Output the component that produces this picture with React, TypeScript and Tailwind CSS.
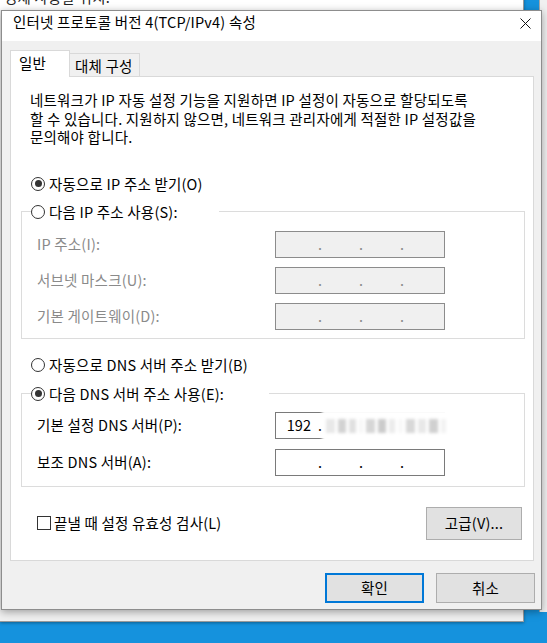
import React from "react";

const Radio = ({ checked, label, dim }: { checked?: boolean; label: string; dim?: boolean }) => (
  <div className="flex h-[18px] items-center gap-[4px]">
    <span className="flex h-[14px] w-[14px] shrink-0 items-center justify-center rounded-full border border-[#333] bg-white">
      {checked && <span className="h-[7px] w-[7px] rounded-full bg-[#333]" />}
    </span>
    <span className={dim ? "text-[#8a8a8a]" : "text-black"}>{label}</span>
  </div>
);

const IpBox = ({ disabled, first, blurred }: { disabled?: boolean; first?: string; blurred?: boolean }) => (
  <div
    className={
      "relative flex h-[27px] w-[170px] shrink-0 items-center border pl-[4px] " +
      (disabled ? "border-[#8c8c8c] bg-[#f0f0f0] text-[#8a8a8a]" : "border-[#7a7a7a] bg-white text-black")
    }
  >
    <span className="w-[38px] text-center">{first ?? ""}</span>
    <span className="w-[3px] text-center">.</span>
    <span className="w-[38px]" />
    <span className="w-[3px] text-center">.</span>
    <span className="w-[38px]" />
    <span className="w-[3px] text-center">.</span>
    <span className="w-[38px]" />
    {blurred && (
      <div className="absolute left-[46px] top-[-3px] flex h-[32px] w-[128px] items-center bg-white px-[4px] blur-[1.5px]">
        <div className="flex h-[22px] w-full items-center gap-[3px]">
          <span className="h-[14px] w-[10px] bg-[#e8e8e8]" />
          <span className="h-[14px] w-[9px] bg-[#d2d2d2]" />
          <span className="h-[14px] w-[8px] bg-[#e0e0e0]" />
          <span className="h-[14px] w-[5px] bg-[#f6f6f6]" />
          <span className="h-[14px] w-[10px] bg-[#d6d6d6]" />
          <span className="h-[14px] w-[9px] bg-[#cbcbcb]" />
          <span className="h-[14px] w-[6px] bg-[#ebebeb]" />
          <span className="h-[14px] w-[6px] bg-[#f8f8f8]" />
          <span className="h-[14px] w-[10px] bg-[#d8d8d8]" />
          <span className="h-[14px] w-[9px] bg-[#e8e8e8]" />
          <span className="h-[14px] w-[10px] bg-[#d0d0d0]" />
          <span className="h-[14px] w-[6px] bg-[#f2f2f2]" />
        </div>
      </div>
    )}
  </div>
);

const Row = ({ label, dim, children }: { label: string; dim?: boolean; children: React.ReactNode }) => (
  <div className="flex items-center justify-between">
    <span className={dim ? "text-[#8a8a8a]" : "text-black"}>{label}</span>
    {children}
  </div>
);

export default function App() {
  return (
    <div className="relative h-[643px] w-[547px] overflow-hidden bg-[#1592dd] font-['Noto_Sans_CJK_KR','Noto_Sans',sans-serif] text-[14.5px] leading-[18px] tracking-[0.2px] text-black">
      {/* window behind the dialog */}
      <div className="absolute left-0 top-[-12px] h-[634px] w-[524px] border-b border-r border-[#9a9a9a] bg-[#f0f0f0] shadow-[0_1px_3px_rgba(0,0,0,0.35)]">
        <div className="h-[22px] bg-white pl-[4px] text-[#222]">경제 사용할 위치.</div>
      </div>
      <div className="absolute right-0 top-0 h-[612px] w-[8px] border-l border-[#a8a8a8] bg-[#f0f0f0]" />

      {/* dialog */}
      <div className="absolute left-[1px] top-[10px] flex h-[600px] w-[541px] flex-col border border-[#8d8d8d] bg-[#f0f0f0] shadow-[0_2px_8px_rgba(0,0,0,0.35)]">
        <div className="flex h-[30px] shrink-0 items-start justify-between bg-white pl-[11px] pr-[10px] pt-[2px]">
          <span>인터넷 프로토콜 버전 4(TCP/IPv4) 속성</span>
          <svg width="11" height="11" viewBox="0 0 11 11" className="mt-[5px]">
            <path d="M0.5 0.5L10.5 10.5M10.5 0.5L0.5 10.5" stroke="#111" strokeWidth="1" fill="none" />
          </svg>
        </div>

        <div className="pl-[8px] pr-[6px] pt-[9px]">
          {/* tabs */}
          <div className="flex items-end">
            <div className="relative z-10 mb-[-1px] h-[27px] w-[60px] border border-b-0 border-[#d9d9d9] bg-white pl-[8px] pt-[3px]">
              일반
            </div>
            <div className="h-[23px] w-[70px] border border-b-0 border-l-0 border-[#d9d9d9] bg-[#f0f0f0] pl-[5px] pt-[3px]">
              대체 구성
            </div>
          </div>

          {/* panel */}
          <div className="mr-[1px] border border-[#d9d9d9] bg-white pb-[20px] pt-[14px]">
            <p className="whitespace-nowrap pl-[19px] leading-[18.5px]">
              네트워크가 IP 자동 설정 기능을 지원하면 IP 설정이 자동으로 할당되도록
              <br />
              할 수 있습니다. 지원하지 않으면, 네트워크 관리자에게 적절한 IP 설정값을
              <br />
              문의해야 합니다.
            </p>

            <div className="mt-[28px] pl-[20px]">
              <Radio checked label="자동으로 IP 주소 받기(O)" />
            </div>

            <fieldset className="ml-[10px] mr-[8px] mt-[10px] border border-[#dcdcdc] px-0 pb-[8px]">
              <legend className="ml-[9px] w-[188px] bg-white">
                <Radio label="다음 IP 주소 사용(S):" />
              </legend>
              <div className="flex flex-col gap-[9px] pl-[15px] pr-[79px] pt-[10px]">
                <Row label="IP 주소(I):" dim>
                  <IpBox disabled />
                </Row>
                <Row label="서브넷 마스크(U):" dim>
                  <IpBox disabled />
                </Row>
                <Row label="기본 게이트웨이(D):" dim>
                  <IpBox disabled />
                </Row>
              </div>
            </fieldset>

            <div className="mt-[17px] pl-[20px]">
              <Radio label="자동으로 DNS 서버 주소 받기(B)" />
            </div>

            <fieldset className="ml-[10px] mr-[8px] mt-[11px] border border-[#dcdcdc] px-0 pb-[10px]">
              <legend className="ml-[9px] w-[238px] bg-white">
                <Radio checked label="다음 DNS 서버 주소 사용(E):" />
              </legend>
              <div className="flex flex-col gap-[10px] pl-[15px] pr-[79px] pt-[9px]">
                <Row label="기본 설정 DNS 서버(P):">
                  <IpBox first="192" blurred />
                </Row>
                <Row label="보조 DNS 서버(A):">
                  <IpBox />
                </Row>
              </div>
            </fieldset>

            <div className="mt-[20px] flex items-center justify-between pl-[26px] pr-[11px]">
              <div className="flex items-center gap-[3px]">
                <span className="h-[14px] w-[14px] border border-[#333] bg-white" />
                <span>끝낼 때 설정 유효성 검사(L)</span>
              </div>
              <button className="h-[33px] w-[96px] border border-[#adadad] bg-[#e1e1e1]">고급(V)...</button>
            </div>
          </div>

          <div className="mt-[12px] flex justify-end gap-[12px]">
            <button className="h-[30px] w-[99px] border-2 border-[#0078d7] bg-[#e1e1e1]">확인</button>
            <button className="h-[30px] w-[99px] border border-[#adadad] bg-[#e1e1e1]">취소</button>
          </div>
        </div>
      </div>
    </div>
  );
}
